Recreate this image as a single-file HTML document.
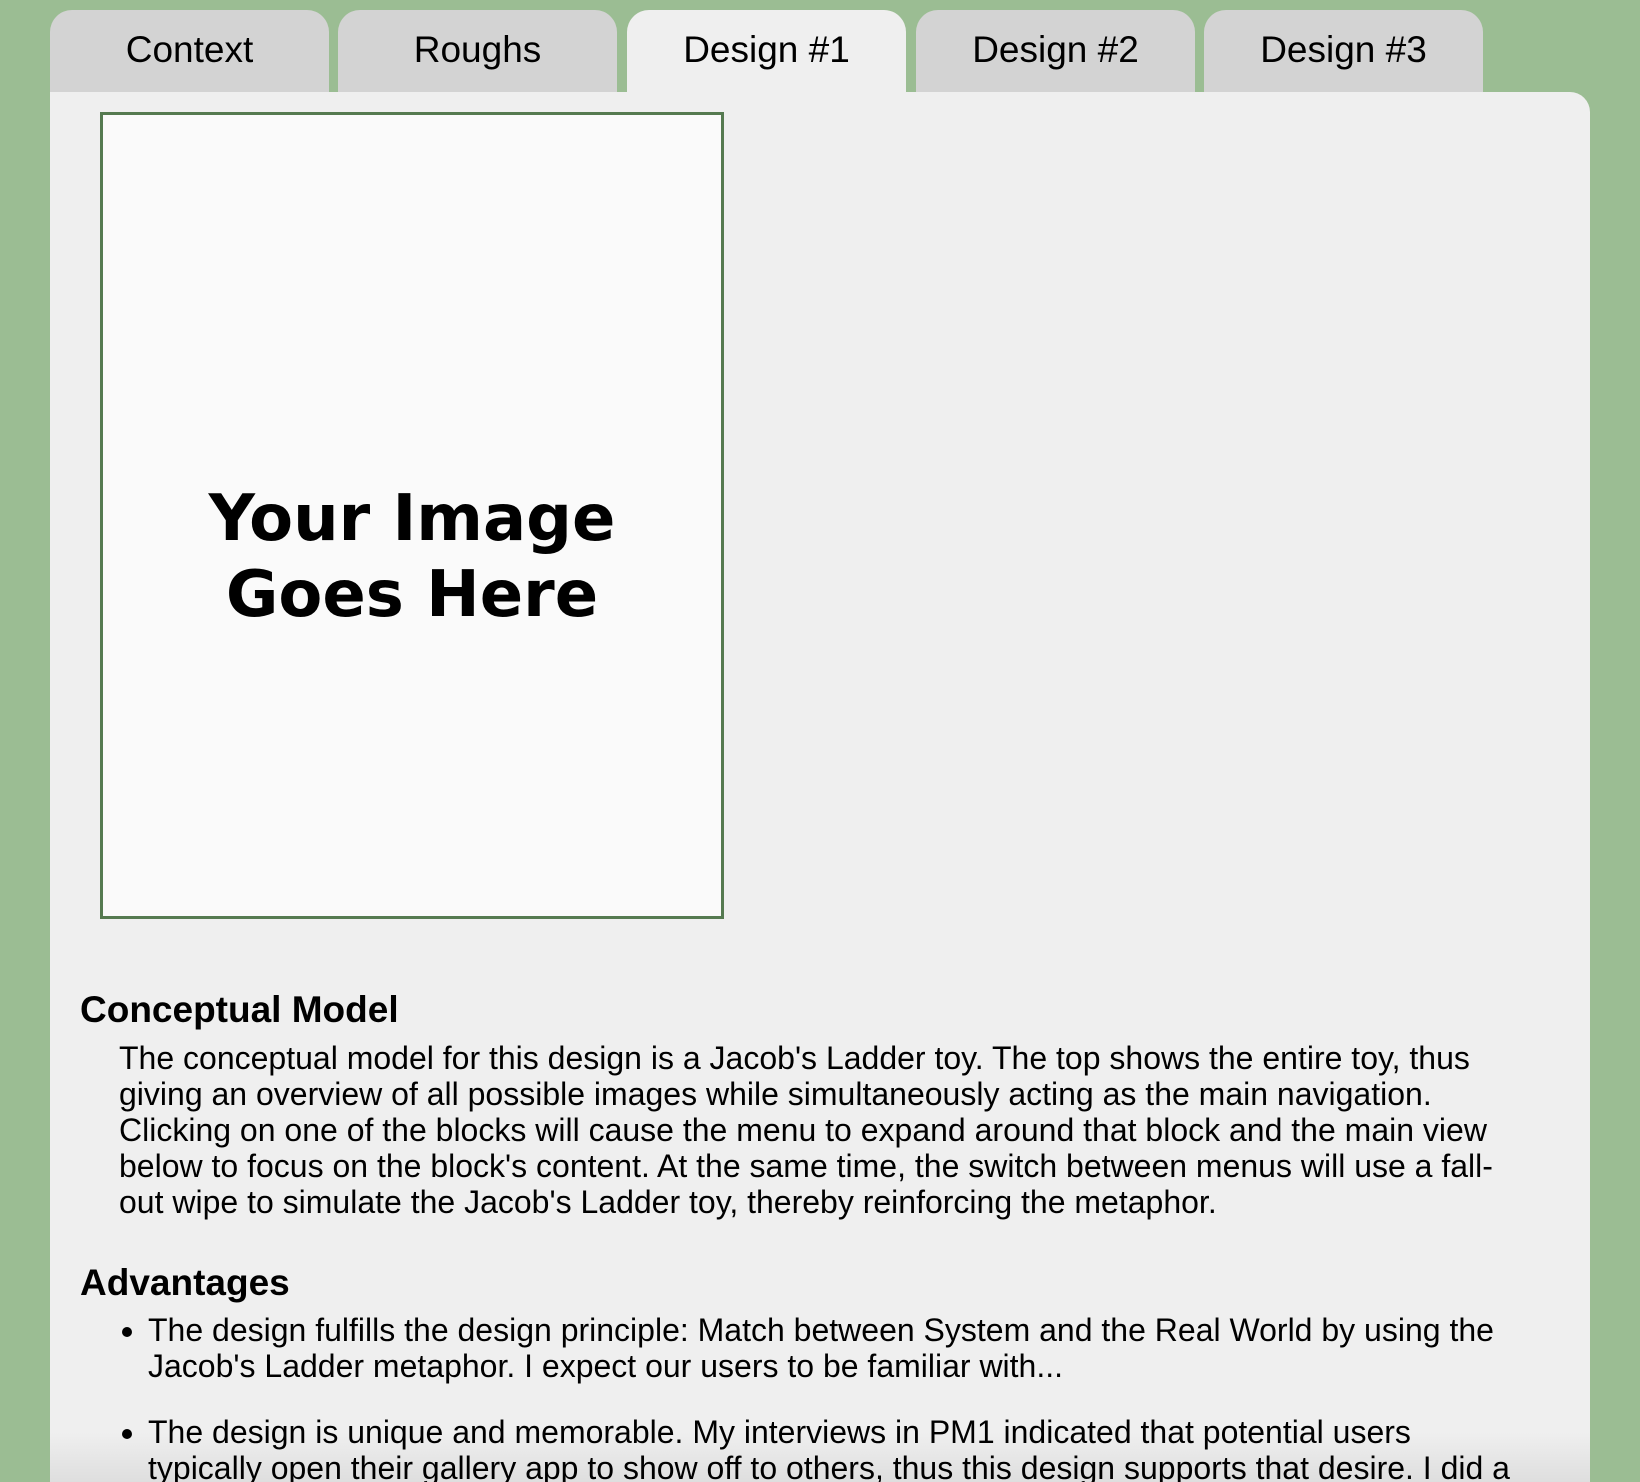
<!DOCTYPE html>
<html><head><meta charset="utf-8"><style>
html,body{margin:0;padding:0;width:1640px;height:1482px;overflow:hidden}
body{background:#9bbd93;position:relative;font-family:"Liberation Sans",Arial,sans-serif;color:#000}
.tab{position:absolute;top:10px;height:82px;width:279px;background:#d3d3d3;border-radius:22px 22px 0 0;text-align:center;font-size:37px;line-height:80px}
.tab.a{background:#efefef}
.panel{position:absolute;left:50px;top:92px;width:1540px;height:1390px;background:#efefef;border-top-right-radius:20px}
.img{position:absolute;left:100px;top:112px;width:618px;height:801px;border:3px solid #557a50;background:#fafafa;text-align:center;font-family:"DejaVu Sans",sans-serif;font-weight:bold;font-size:64px;line-height:76px}
.img div{position:absolute;left:0;right:0;top:366px}
h2{position:absolute;margin:0;font-size:37px;font-weight:bold;left:80px}
.p{position:absolute;left:119px;font-size:32px;line-height:36px;white-space:nowrap}
ul{position:absolute;left:110px;margin:0;padding:0 0 0 38px;font-size:32px;line-height:36px;white-space:nowrap}
li{margin-bottom:30px}
.fade{position:absolute;left:50px;top:1432px;width:1540px;height:50px;background:linear-gradient(rgba(0,0,0,0),rgba(0,0,0,0.07))}
</style></head><body>
<div class="panel"></div>
<div class="tab" style="left:50px">Context</div>
<div class="tab" style="left:338px">Roughs</div>
<div class="tab a" style="left:627px">Design #1</div>
<div class="tab" style="left:916px">Design #2</div>
<div class="tab" style="left:1204px">Design #3</div>
<div class="img"><div>Your Image<br>Goes Here</div></div>
<h2 style="top:989px">Conceptual Model</h2>
<div class="p" style="top:1040px">The conceptual model for this design is a Jacob's Ladder toy. The top shows the entire toy, thus<br>giving an overview of all possible images while simultaneously acting as the main navigation.<br>Clicking on one of the blocks will cause the menu to expand around that block and the main view<br>below to focus on the block's content. At the same time, the switch between menus will use a fall-<br>out wipe to simulate the Jacob's Ladder toy, thereby reinforcing the metaphor.</div>
<h2 style="top:1262px">Advantages</h2>
<ul style="top:1312px">
<li>The design fulfills the design principle: Match between System and the Real World by using the<br>Jacob's Ladder metaphor. I expect our users to be familiar with...</li>
<li>The design is unique and memorable. My interviews in PM1 indicated that potential users<br>typically open their gallery app to show off to others, thus this design supports that desire. I did a</li>
</ul>
<div class="fade"></div>
</body></html>
